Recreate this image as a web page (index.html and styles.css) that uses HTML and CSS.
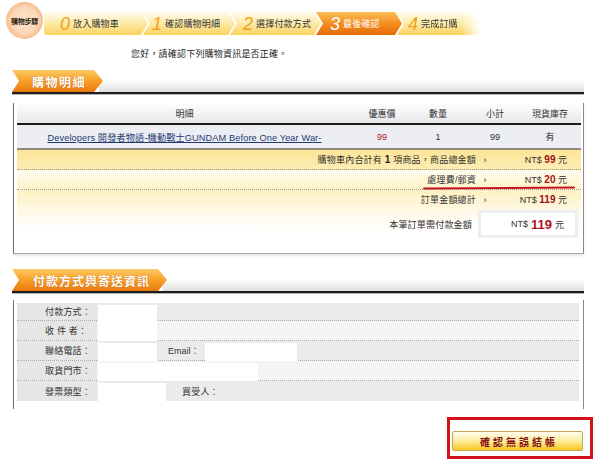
FILE: index.html
```html
<!DOCTYPE html>
<html lang="zh-Hant">
<head>
<meta charset="utf-8">
<title>最後確認</title>
<link rel="stylesheet" href="styles.css">
</head>
<body>
<div class="steps">
  <div class="badge">購物步驟</div>
  <div class="bar">
    <div class="step s0"><i>0</i>放入購物車</div>
    <div class="step s1"><i>1</i>確認購物明細</div>
    <div class="step s2"><i>2</i>選擇付款方式</div>
    <div class="step s3 active"><i>3</i>最後確認</div>
    <div class="step s4"><i>4</i>完成訂購</div>
  </div>
</div>

<p class="greet">您好，請確認下列購物資訊是否正確。</p>

<section class="sec sec1">
  <div class="sec-head"><span class="tab tab1">購物明細</span><span class="band"></span></div>
  <div class="box cart">
    <div class="cols thead">
      <span>明細</span><span>優惠價</span><span>數量</span><span>小計</span><span>現貨庫存</span>
    </div>
    <div class="cols item">
      <span><a class="link" href="#">Developers 開發者物語-機動戰士GUNDAM Before One Year War-</a></span>
      <span class="red">99</span><span>1</span><span>99</span><span>有</span>
    </div>
    <div class="sum r1">
      <span class="lab">購物車內合計有 <b>1</b> 項商品，商品總金額</span><span class="arr">›</span><span class="amt">NT$ <b class="num">99</b> 元</span>
    </div>
    <div class="sum r2">
      <span class="lab">處理費/郵資</span><span class="arr">›</span><span class="amt">NT$ <b class="num">20</b> 元</span>
      <span class="redline"></span>
    </div>
    <div class="sum r3">
      <span class="lab">訂單金額總計</span><span class="arr">›</span><span class="amt">NT$ <b class="num">119</b> 元</span>
    </div>
    <div class="pay">
      <span class="lab">本筆訂單需付款金額</span>
      <span class="paybox">NT$ <b class="big">119</b> 元</span>
    </div>
  </div>
</section>

<section class="sec sec2">
  <div class="sec-head"><span class="tab tab2">付款方式與寄送資訊</span><span class="band"></span></div>
  <div class="box info">
    <div class="irow first">
      <span class="lbl">付款方式：</span><span class="val w59"></span>
    </div>
    <div class="irow alt">
      <span class="lbl">收 件 者：</span><span class="val w59 joined"></span>
    </div>
    <div class="irow">
      <span class="lbl">聯絡電話：</span><span class="val w59"></span><span class="sub email">Email：</span><span class="val w92"></span>
    </div>
    <div class="irow alt">
      <span class="lbl">取貨門市：</span><span class="val w160"></span>
    </div>
    <div class="irow last">
      <span class="lbl">發票類型：</span><span class="val w68"></span><span class="sub buyer">買受人：</span>
    </div>
  </div>
</section>

<div class="actions">
  <div class="mark"><button class="btn" type="button">確認無誤結帳</button></div>
</div>
</body>
</html>
```

FILE: styles.css
```css
* { box-sizing: border-box; }
html, body { margin: 0; padding: 0; background: #fff; }
body {
  width: 600px;
  height: 468px;
  overflow: hidden;
  font-family: "Liberation Sans", "Noto Sans CJK TC", sans-serif;
  font-size: 9px;
  color: #333;
}

/* ---------- steps ---------- */
.steps { display: flex; align-items: flex-start; padding-top: 2px; height: 40px; }
.badge {
  width: 37px; height: 37px; margin-left: 6px; border-radius: 50%;
  background: radial-gradient(circle at 50% 50%, #fde6d2 0, #fbd7b7 50%, #f6bb8a 72%, #f8c8a2 100%);
  display: flex; align-items: center; justify-content: center;
  font-size: 7px; font-weight: bold; color: #2a1a10; letter-spacing: -0.3px;
}
.bar { display: flex; margin: 10px 0 0 1px; height: 23px; }
.step {
  height: 23px; display: flex; align-items: center; white-space: nowrap;
  background: linear-gradient(#fffcee, #fdecae 45%, #fbd260 100%);
  clip-path: polygon(0 0, calc(100% - 7px) 0, 100% 50%, calc(100% - 7px) 100%, 0 100%, 7px 50%);
  margin-left: -5px; color: #333; font-size: 9px; letter-spacing: .2px;
}
.step i {
  font-family: "Liberation Sans", sans-serif; font-style: italic; font-size: 18px;
  color: #f2a01c; margin-right: 3px; letter-spacing: 0; line-height: 1;
}
.s0 { width: 104px; padding-left: 16px; margin-left: 0;
  clip-path: polygon(0 0, calc(100% - 7px) 0, 100% 50%, calc(100% - 7px) 100%, 0 100%);
  border-radius: 3px 0 0 3px; }
.s1 { width: 92px; padding-left: 9px; }
.s2 { width: 91px; padding-left: 13px; }
.s3 { width: 86px; padding-left: 14px; }
.s4 { width: 83px; padding-left: 11px;
  clip-path: polygon(0 0, 100% 0, 100% 100%, 0 100%, 7px 50%);
  -webkit-mask-image: linear-gradient(to right, #000 78%, transparent 100%);
  mask-image: linear-gradient(to right, #000 78%, transparent 100%); }
.active { background: linear-gradient(#fcbd52, #f48e20 50%, #e56a08 100%); color: #fff; }
.active i { color: #fff; }

/* ---------- greeting ---------- */
.greet { margin: 8px 0 0; padding-left: 131px; line-height: 12px; font-size: 9px; letter-spacing: .2px; color: #222; }

/* ---------- sections ---------- */
.sec { margin: 10px 16px 0 12px; }
.sec2 { margin-top: 15px; }
.sec-head {
  display: flex; align-items: flex-end; height: 24px;
  border-bottom: 2px solid #1e1e1e; box-shadow: 0 1px 0 #b5b5b5;
}
.tab {
  height: 22px; display: flex; align-items: center; flex: none;
  padding-left: 20px; color: #fff; font-size: 12px; font-weight: bold; letter-spacing: 1.5px;
  background: linear-gradient(#fdca66, #f8a42c 45%, #ea780c 100%);
  clip-path: polygon(0 0, calc(100% - 9px) 0, 100% 50%, calc(100% - 9px) 100%, 0 100%, 7px 50%);
  text-shadow: 0 0 1px #b8580a;
}
.tab1 { width: 91px; }
.tab2 { width: 155px; padding-left: 21px; letter-spacing: 1px; }
.band { flex: 1; height: 12px; background: linear-gradient(#ffffff, #dedede); margin-left: -4px; }

.box {
  margin: 9px 0 0 1px;
  border-left: 1px solid #6e6e6e;
  border-right: 1px solid #8a8a8a;
}
.cart {
  border-bottom: 1px solid #a8a8a8;
  box-shadow: 0 2px 2px #e8e8e8;
  padding: 1px 2px 14px 3px;
}

/* cart table */
.cols { display: grid; grid-template-columns: 335px 60px 52px 62px 48px; align-items: center; text-align: center; }
.thead { height: 21px; border-bottom: 2px solid #1a1a1a; background: linear-gradient(#fdfdfd, #e8e8e8); color: #333; }
.item { height: 25px; border-bottom: 2px solid #8e8b83; background: #eceef3; color: #333; }
.link { color: #1e3a72; text-decoration: underline; font-size: 9.2px; letter-spacing: .12px; }
.red { color: #b01018; }

.sum { position: relative; display: grid; grid-template-columns: 1fr 12px 90px; align-items: center; height: 20px; }
.sum .lab { text-align: right; padding-right: 3px; letter-spacing: .2px; }
.sum .lab b { font-weight: bold; color: #222; font-size: 10px; }
.arr { text-align: center; font-size: 9px; color: #333; }
.amt { text-align: right; padding-right: 14px; }
.num { color: #a01018; font-size: 10px; }
.r1 { background: linear-gradient(#fde597, #fdedb4); border-bottom: 1px dotted #9a9a8a; }
.r2 { background: linear-gradient(#fffcef, #fef3c9); border-bottom: 1px dotted #9a9a8a; }
.r3 { height: 19px; background: linear-gradient(#fef0c0, #fff8e2); }
.redline {
  position: absolute; left: 406px; width: 152px; bottom: 0; height: 2px;
  background: #c8141c; border-radius: 1px; transform: rotate(-0.3deg);
}
.pay {
  display: grid; grid-template-columns: 1fr 100px; align-items: center;
  height: 30px; padding: 1px 3px 1px 0;
  background: linear-gradient(#fff8e4, #ffffff 70%);
}
.pay .lab { text-align: right; padding-right: 6px; letter-spacing: .2px; }
.paybox {
  height: 28px; border: 3px solid #eeeeee; background: #fff;
  display: flex; align-items: center; justify-content: flex-end; gap: 3px; padding-right: 11px;
}
.big { color: #b0101a; font-size: 13px; font-weight: bold; }

/* info table */
.info { margin-top: 7px; padding: 3px 4px 8px 3px; }
.irow { display: flex; height: 20px; background: #ebebeb; border-bottom: 1px dotted #a8a8a8; }
.irow.first { height: 18px; }
.irow.alt { background: #f4f4f4; }
.irow.last { border-bottom: none; }
.lbl { width: 80px; flex: none; background: #e6e6e6; display: flex; align-items: center; padding-left: 28px; letter-spacing: .2px; color: #333; }
.val { flex: none; background: #fff; margin: 2px 0 0 1px; box-shadow: 0 1px 0 #fff; }
.val.joined { margin-top: 0; }
.w59 { width: 59px; }
.w92 { width: 92px; }
.w160 { width: 160px; }
.w68 { width: 68px; }
.sub { display: flex; align-items: center; flex: none; color: #333; }
.email { width: 47px; padding-left: 11px; }
.buyer { padding-left: 16px; letter-spacing: .2px; }

/* action */
.actions { display: flex; justify-content: flex-end; padding-right: 7px; margin-top: 8px; }
.mark { width: 146px; height: 42px; border: 3px solid #d3131b; padding: 11px 0 0 2px; }
.btn {
  display: block; width: 131px; height: 20px; margin: 0; padding: 0;
  border: 1px solid #c9a452; border-radius: 2px;
  background: linear-gradient(#fffef2, #fdec9a 50%, #f6c822 100%);
  font-family: "Liberation Sans", "Noto Sans CJK TC", sans-serif;
  font-size: 10px; font-weight: bold; color: #861014; letter-spacing: 3px;
  text-indent: 3px;
}
```
